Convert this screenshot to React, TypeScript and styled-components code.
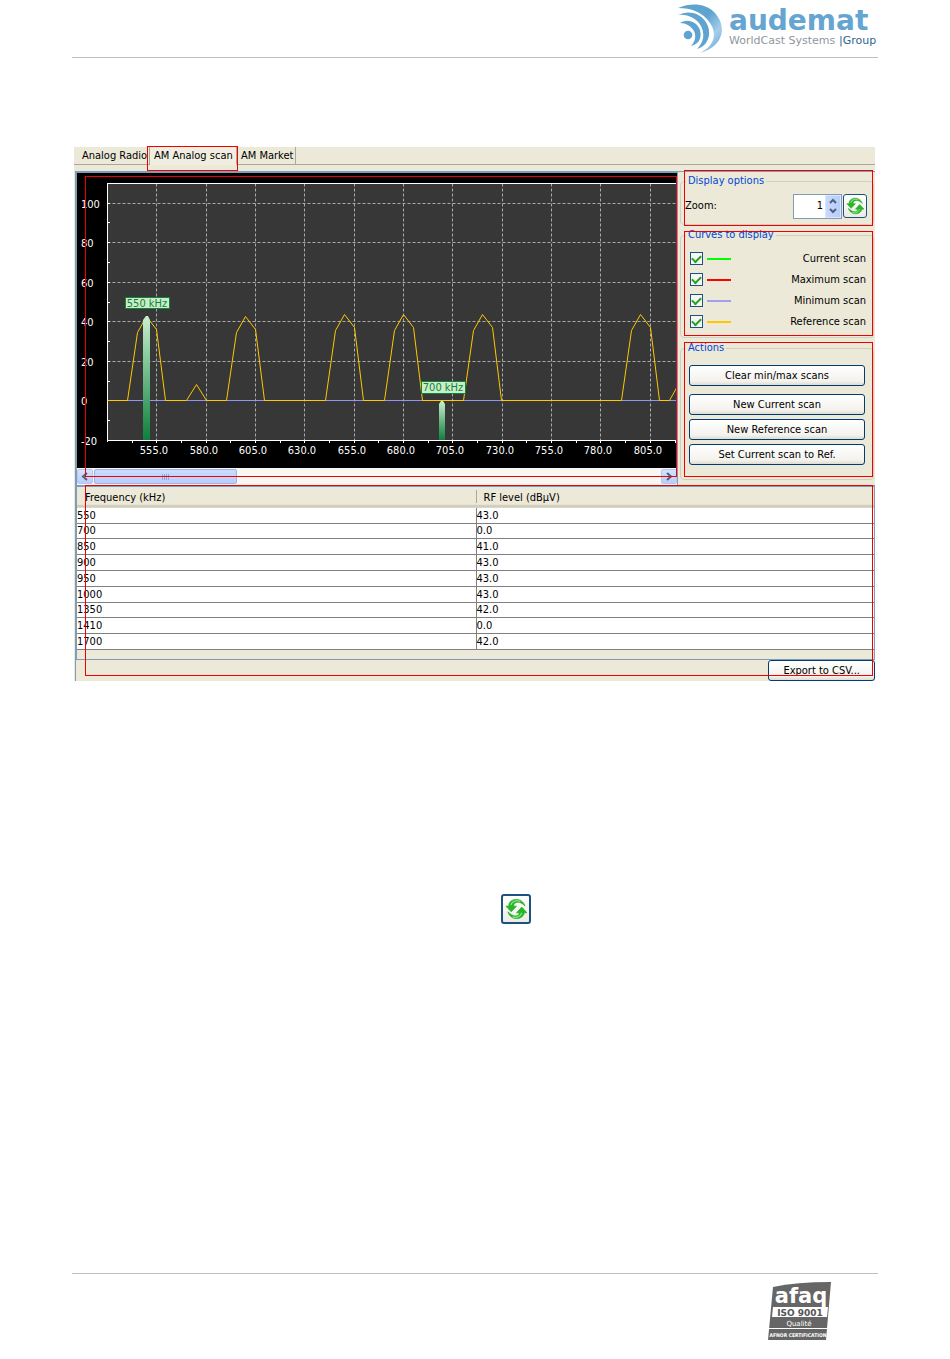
import React from "react";
import styled, { createGlobalStyle } from "styled-components";

const UI_FONT = '"DejaVu Sans Condensed", "DejaVu Sans", sans-serif';
const BEIGE = "#ece9d8";
const BLUE = "#7f9db9";
const NAVY = "#003c74";

const GlobalStyle = createGlobalStyle`
  * { box-sizing: border-box; }
  body { margin: 0; background: #fff; color: #000; font: 11px/14px ${UI_FONT}; }
  button, input, table { font: inherit; color: inherit; }
`;

const Page = styled.div`
  min-height: 100vh;
  padding: 0 72px;
  display: flex;
  flex-direction: column;
`;

const Header = styled.header`
  height: 58px;
  border-bottom: 1px solid #c0c0c0;
  display: flex;
  justify-content: flex-end;
  align-items: flex-start;
`;

const Footer = styled.footer`
  height: 86px;
  margin-top: auto;
  border-top: 1px solid #c0c0c0;
  display: flex;
  justify-content: flex-end;
  padding: 8px 46px 0 0;
`;

const Panel = styled.section`
  margin: 89px 3px 0 2px;
  background: ${BEIGE};
`;

const Callout = styled.span<{ $inset: string }>`
  position: absolute;
  inset: ${(p) => p.$inset};
  border: 1px solid #f00000;
  pointer-events: none;
  z-index: 2;
`;

const Tabs = styled.nav`
  display: grid;
  grid-template-columns: 76px 87px 59px 1fr;
  height: 18px;
  &::after { content: ""; border-bottom: 1px solid #aca899; }
`;

const Tab = styled.button<{ $active?: boolean }>`
  position: relative;
  border: 0;
  border-right: 1px solid #aca899;
  border-bottom: 1px solid ${(p) => (p.$active ? "#f0eee1" : "#aca899")};
  background: ${(p) => (p.$active ? "#f0eee1" : "transparent")};
  padding: 0 0 0 ${(p) => (p.$active ? 4 : 8)}px;
  text-align: left;
  white-space: nowrap;
  line-height: 16px;
  &:nth-child(3) { padding-left: 4px; }
`;

const ScanArea = styled.div`
  margin: 6px 0 0 1px;
  border-left: 1px solid ${BLUE};
`;

const Upper = styled.div`
  display: flex;
`;

const ChartBox = styled.div`
  position: relative;
  flex: 1;
  min-width: 0;
  border: solid ${BLUE};
  border-width: 2px 1px 0 1px;
`;

const Plot = styled.svg`
  display: block;
  width: 100%;
  height: 295px;
  background: #000;
  font: 11px ${UI_FONT};
`;

const ScrollBar = styled.div`
  display: flex;
  height: 17px;
  padding: 1px 0;
  gap: 1px;
  background: #f8f7f2;
`;

const ScrollButton = styled.button`
  width: 16px;
  padding: 0;
  border: 1px solid #b4c8f6;
  border-radius: 2px;
  background: linear-gradient(#d6e2fd, #b9cdf9);
  display: grid;
  place-items: center;
`;

const Thumb = styled.div`
  width: 143px;
  border: 1px solid #98b4e8;
  border-radius: 2px;
  background: linear-gradient(#cddcfe, #b8cdfb);
  margin-right: auto;
  display: grid;
  place-items: center;
`;

const Sidebar = styled.aside`
  width: 197px;
  padding: 2px 1px 0 2px;
  border-top: 1px solid ${BLUE};
`;

const GroupWrap = styled.div<{ $top: number }>`
  position: relative;
  padding-top: ${(p) => p.$top}px;
`;

const Group = styled.fieldset<{ $height: number }>`
  margin: 0;
  min-width: 0;
  height: ${(p) => p.$height}px;
  padding: 0 7px 0 5px;
  border: 1px solid #d0d0bf;
  border-radius: 4px;
`;

const Legend = styled.legend`
  padding: 0 2px;
  color: #0046d5;
`;

const ZoomRow = styled.div`
  display: flex;
  align-items: center;
  height: 36px;
  margin: 0 -1px;
  label { flex: 1; }
`;

const Spinner = styled.div`
  display: flex;
  width: 49px;
  height: 25px;
  margin-right: 1px;
  border: 1px solid ${BLUE};
  background: #fff;
`;

const SpinInput = styled.input`
  flex: 1;
  min-width: 0;
  padding: 0 2px 0 0;
  border: 0;
  background: transparent;
  text-align: right;
`;

const SpinButtons = styled.div`
  display: flex;
  flex-direction: column;
  width: 16px;
  background: linear-gradient(90deg, #c9d8fc, #b9cdf9);
  border: 1px solid #dde6fd;
`;

const SpinButton = styled.button`
  flex: 1;
  padding: 0;
  border: 0;
  background: transparent;
  display: grid;
  place-items: center;
`;

const IconButton = styled.button<{ $size: number }>`
  width: ${(p) => p.$size}px;
  height: ${(p) => p.$size}px;
  padding: 0;
  border: ${(p) => (p.$size > 26 ? 2 : 1)}px solid #1c5180;
  border-radius: 3px;
  background: linear-gradient(#fff, #ecebe5);
  display: grid;
  place-items: center;
`;

const CurveList = styled.div`
  display: grid;
  gap: 8px;
  padding: 10px 0 0 4px;
`;

const Curve = styled.label`
  display: flex;
  align-items: center;
  height: 13px;
  gap: 4px;
  span { margin-left: auto; }
`;

const Check = styled.input`
  appearance: none;
  width: 13px;
  height: 13px;
  margin: 0;
  border: 1px solid #1c5180;
  background: #f6f6f2;
  display: grid;
  place-items: center;
  &:checked::before {
    content: "";
    width: 7px;
    height: 4px;
    border: solid #21a121;
    border-width: 0 0 2px 2px;
    transform: translateY(-1px) rotate(-45deg);
  }
`;

const Swatch = styled.i<{ $color: string }>`
  width: 24px;
  height: 2px;
  background: ${(p) => p.$color};
`;

const Actions = styled.div`
  display: grid;
  gap: 4px;
  padding: 10px 1px 0 3px;
  button:first-child { margin-bottom: 4px; }
`;

const XpButton = styled.button`
  height: 21px;
  padding: 0 14px;
  border: 1px solid ${NAVY};
  border-radius: 3px;
  background: linear-gradient(#fff, #f3f2ed 80%, #dedbd0);
  line-height: 18px;
  white-space: nowrap;
`;

const TableBox = styled.div`
  position: relative;
`;

const TableFrame = styled.div`
  border: solid ${BLUE};
  border-width: 2px 1px 1px 1px;
  padding-bottom: 9px;
`;

const Table = styled.table`
  width: 100%;
  table-layout: fixed;
  border-collapse: separate;
  border-spacing: 0;
  th {
    height: 21px;
    padding: 0 0 0 8px;
    font-weight: normal;
    text-align: left;
    background: linear-gradient(${BEIGE} 82%, #cbc7b8 90%, #e0dccb);
  }
  th:first-child { width: calc(50% - 1px); }
  th + th {
    background-image: linear-gradient(#aca899, #aca899),
      linear-gradient(${BEIGE} 82%, #cbc7b8 90%, #e0dccb);
    background-size: 1px 13px, auto;
    background-position: 0 3px, 0 0;
    background-repeat: no-repeat;
  }
  td {
    height: 16px;
    padding: 0;
    line-height: 14px;
    background: #fff;
    border-bottom: 1px solid #808080;
  }
  tr:nth-child(5n + 2) td { height: 15px; }
  td + td { border-left: 1px solid #808080; }
`;

const ExportRow = styled.div`
  display: flex;
  justify-content: flex-end;
`;

const InlineFigure = styled.div`
  display: flex;
  padding: 213px 0 0 429px;
`;

const RefreshIcon = ({ size }: { size: number }) => (
  <svg width={size} height={size} viewBox="1 1 23 22" aria-hidden="true">
    <g fill="#25b825" stroke="#1a9a1a" strokeWidth="0.6" strokeLinejoin="round">
      <path d="M22 9 C20 2 12 0 7 4 C5 6 5 7 5 9 L2 9 L7.500 15 L13 9 L10 9 C10 4 17 3 22 9Z" />
      <path d="M4 15 C6 22 14 24 19 20 C21 18 21 17 21 16 L24 16 L18.500 10 L13 16 L16 16 C15 21 9 20 4 15Z" />
    </g>
    <path d="M7 8 C8 4 13 2 17 4.500 M9 20 C13 22 17 20 18.500 16" fill="none" stroke="#7be87b" strokeWidth="1.300" />
  </svg>
);

const Chevron = ({ d, w = 8, h = 9 }: { d: string; w?: number; h?: number }) => (
  <svg width={w} height={h} viewBox={`0 0 ${w} ${h}`} aria-hidden="true">
    <path d={d} fill="none" stroke="#4d6185" strokeWidth="2" />
  </svg>
);

const BrandLogo = () => (
  <svg width="204" height="56" viewBox="0 0 204 56" role="img" aria-label="audemat">
    <defs>
      <linearGradient id="swirl" x1="0" y1="0" x2="1" y2="1">
        <stop offset="0.45" stopColor="#5fa3d0" />
        <stop offset="0.72" stopColor="#a5cdea" />
        <stop offset="1" stopColor="#5a9fce" />
      </linearGradient>
    </defs>
    <path d="M4 8 C18 2 32 4 40 12 C53 25 51 46 26 53 C41 46 43 33 36 23 C29 12 17 8 4 8Z" fill="url(#swirl)" />
    <g fill="#5fa3d0">
      <path d="M4 15 C16 9 28 14 33 24 C38 34 34 46 23 49 C30 42 31 34 27 26 C22 18 14 14 4 15Z" />
      <path d="M6 23 C14 18 23 22 26 30 C28 38 25 44 17 46 C22 41 22 35 20 31 C17 26 12 23 6 23Z" />
      <circle cx="14" cy="35" r="4.300" />
    </g>
    <text x="55" y="30" fontFamily="DejaVu Sans, sans-serif" fontWeight="bold" fontSize="28" fill="#64a5d2">audemat</text>
    <text x="55" y="44" fontFamily="DejaVu Sans, sans-serif" fontSize="11" fill="#8f979d">WorldCast Systems</text>
    <text x="165" y="44" fontFamily="DejaVu Sans, sans-serif" fontSize="11" fill="#2f6590">|Group</text>
  </svg>
);

const CertLogo = () => (
  <svg width="64" height="60" viewBox="0 0 64 60" role="img" aria-label="afaq ISO 9001">
    <path d="M5 5 Q28 0 63 0 L58 58 L0 58Z" fill="#666" />
    <g fontFamily="DejaVu Sans, sans-serif" textAnchor="middle" fill="#fff">
      <text x="33" y="21" fontSize="21" fontWeight="bold">afaq</text>
      <path d="M5 25 H60 L59 35 H4Z" />
      <path d="M1 46 H59 V47 H1Z" />
      <text x="32" y="34" fontSize="9" fontWeight="bold" fill="#555">ISO 9001</text>
      <text x="31" y="44" fontSize="7">Qualité</text>
      <text x="30" y="55" fontSize="5" fontWeight="bold" fontFamily="DejaVu Sans Condensed, sans-serif">AFNOR CERTIFICATION</text>
    </g>
  </svg>
);

const gridX = [79, 129, 178, 227, 277, 326, 375, 425, 474, 523, 573];
const minorX = [55, 104, 153, 203, 252, 301, 351, 400, 449, 499, 548, 598];
const gridY = [30, 69, 109, 148, 188];
const minorY = [49, 89, 129, 168, 208, 247];
const peaks = [
  { x: 69, top: 143 },
  { x: 168, top: 143 },
  { x: 267, top: 141 },
  { x: 326, top: 141 },
  { x: 405, top: 141 },
  { x: 563, top: 141 },
];

const hump = ({ x, top }: { x: number; top: number }) =>
  `${x - 19},227 ${x - 9},${top + 16} ${x},${top} ${x + 10},${top + 13} ${x + 19},227`;

const referenceCurve = [
  "30,227",
  hump(peaks[0]),
  "109,227 119,211 129,227",
  ...peaks.slice(1).map(hump),
  "592,227 601,211",
].join(" ");

const ScanPlot = () => (
  <Plot role="img" aria-label="AM analog scan">
    <defs>
      <linearGradient id="bar" x1="0" y1="0" x2="0" y2="1">
        <stop offset="0" stopColor="#c8f0cf" />
        <stop offset="1" stopColor="#0d803b" />
      </linearGradient>
    </defs>
    <rect x="30" y="10" width="100%" height="257" fill="#373737" />
    <g transform="translate(0.5 0.5)" fill="none">
      <g stroke="#aaa" strokeDasharray="3 2">
        {gridX.map((x) => <line key={x} x1={x} x2={x} y1="10" y2="267" />)}
        {gridY.map((y) => <line key={y} x1="30" x2="100%" y1={y} y2={y} />)}
      </g>
      <g stroke="#fff" shapeRendering="crispEdges">
        <path d="M30 10V268" />
        <line x1="29" x2="100%" y1="10" y2="10" />
        <line x1="29" x2="100%" y1="267" y2="267" />
        {[...gridY, ...minorY, 227].map((y) => <line key={y} x1="29" x2="32" y1={y} y2={y} />)}
        {[...gridX, ...minorX].map((x) => <line key={x} x1={x} x2={x} y1="266" y2="269" />)}
      </g>
      <line x1="31" x2="100%" y1="227" y2="227" stroke="#9494f4" />
      <polyline points={referenceCurve} stroke="#ffc800" />
    </g>
    <path d="M66 147 L69 143 H71 L73 147 V267 H66Z" fill="url(#bar)" />
    <path d="M362 231 L364 228 H366 L368 231 V267 H362Z" fill="url(#bar)" />
    <g fill="#c6efc6" stroke="#14803c">
      <rect x="48.5" y="124.5" width="44" height="11" />
      <rect x="344.5" y="208.5" width="44" height="12" />
    </g>
    <g fill="#14803c" textAnchor="middle">
      <text x="70" y="134">550 kHz</text>
      <text x="366" y="218">700 kHz</text>
    </g>
    <g fill="#fff">
      {[100, 80, 60, 40, 20, 0, -20].map((v, i) => (
        <text key={v} x="4" y={[35, 74, 114, 153, 193, 232, 272][i]}>{v}</text>
      ))}
      {gridX.map((x, i) => (
        <text key={x} x={x - 2} y="281" textAnchor="middle">{(555 + i * 25).toFixed(1)}</text>
      ))}
    </g>
  </Plot>
);

const curves = [
  ["Current scan", "#00ff00"],
  ["Maximum scan", "#ff0000"],
  ["Minimum scan", "#a0a0ee"],
  ["Reference scan", "#ffc800"],
];

const rows = [
  ["550", "43.0"],
  ["700", "0.0"],
  ["850", "41.0"],
  ["900", "43.0"],
  ["950", "43.0"],
  ["1000", "43.0"],
  ["1350", "42.0"],
  ["1410", "0.0"],
  ["1700", "42.0"],
];

export default function App() {
  return (
    <Page>
      <GlobalStyle />
      <Header><BrandLogo /></Header>
      <Panel>
        <Tabs>
          <Tab>Analog Radio</Tab>
          <Tab $active>AM Analog scan<Callout $inset="-1px -2px -7px -3px" /></Tab>
          <Tab>AM Market</Tab>
        </Tabs>
        <ScanArea>
          <Upper>
            <ChartBox>
              <ScanPlot />
              <ScrollBar>
                <ScrollButton aria-label="Scroll left"><Chevron d="M6 1 L2 4.5 L6 8" /></ScrollButton>
                <Thumb>
                  <svg width="8" height="6" aria-hidden="true">
                    <path d="M.5 0V6M2.5 0V6M4.5 0V6M6.5 0V6" stroke="#8fa9e0" />
                  </svg>
                </Thumb>
                <ScrollButton aria-label="Scroll right"><Chevron d="M2 1 L6 4.5 L2 8" /></ScrollButton>
              </ScrollBar>
              <Callout $inset="3px 0 8px 8px" />
            </ChartBox>
            <Sidebar>
              <GroupWrap $top={0}>
                <Group $height={51}>
                  <Legend>Display options</Legend>
                  <ZoomRow>
                    <label htmlFor="zoom">Zoom:</label>
                    <Spinner>
                      <SpinInput id="zoom" defaultValue="1" />
                      <SpinButtons>
                        <SpinButton aria-label="Increase"><Chevron w={8} h={6} d="M1 5 L4 2 L7 5" /></SpinButton>
                        <SpinButton aria-label="Decrease"><Chevron w={8} h={6} d="M1 1 L4 4 L7 1" /></SpinButton>
                      </SpinButtons>
                    </Spinner>
                    <IconButton $size={24} aria-label="Refresh"><RefreshIcon size={18} /></IconButton>
                  </ZoomRow>
                </Group>
                <Callout $inset="-4px 1px -1px 4px" />
              </GroupWrap>
              <GroupWrap $top={3}>
                <Group $height={110}>
                  <Legend>Curves to display</Legend>
                  <CurveList>
                    {curves.map(([name, color]) => (
                      <Curve key={name}>
                        <Check type="checkbox" defaultChecked />
                        <Swatch $color={color} />
                        <span>{name}</span>
                      </Curve>
                    ))}
                  </CurveList>
                </Group>
                <Callout $inset="6px 1px 2px 4px" />
              </GroupWrap>
              <GroupWrap $top={3}>
                <Group $height={139}>
                  <Legend>Actions</Legend>
                  <Actions>
                    <XpButton>Clear min/max scans</XpButton>
                    <XpButton>New Current scan</XpButton>
                    <XpButton>New Reference scan</XpButton>
                    <XpButton>Set Current scan to Ref.</XpButton>
                  </Actions>
                </Group>
                <Callout $inset="4px 1px 3px 4px" />
              </GroupWrap>
            </Sidebar>
          </Upper>
          <TableBox>
            <TableFrame>
              <Table>
                <thead>
                  <tr><th scope="col">Frequency (kHz)</th><th scope="col">RF level (dBµV)</th></tr>
                </thead>
                <tbody>
                  {rows.map(([f, level]) => (
                    <tr key={f}><td>{f}</td><td>{level}</td></tr>
                  ))}
                </tbody>
              </Table>
            </TableFrame>
            <ExportRow><XpButton>Export to CSV...</XpButton></ExportRow>
            <Callout $inset="0 2px 5px 9px" />
          </TableBox>
        </ScanArea>
      </Panel>
      <InlineFigure>
        <IconButton $size={30} aria-label="Refresh"><RefreshIcon size={22} /></IconButton>
      </InlineFigure>
      <Footer><CertLogo /></Footer>
    </Page>
  );
}
